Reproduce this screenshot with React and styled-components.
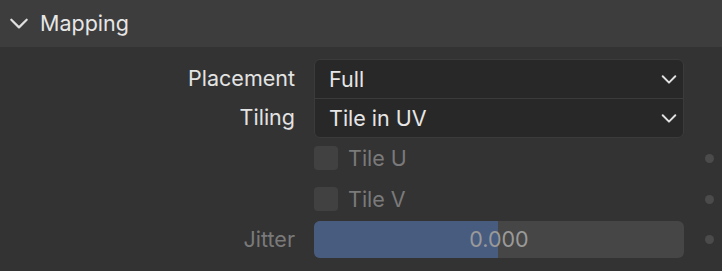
import * as React from "react"
import styled, { createGlobalStyle } from "styled-components"

const GlobalStyle = createGlobalStyle`
  html, body {
    margin: 0;
    padding: 0;
    background: #333333;
    overflow: hidden;
  }
  body {
    font-family: Inter, "Noto Sans", sans-serif;
    -webkit-font-smoothing: antialiased;
  }
`

const Panel = styled.div`
  width: 722px;
  height: 271px;
  background: #333333;
  overflow: hidden;
`

const Header = styled.div`
  height: 47px;
  background: #3d3d3d;
  display: flex;
  align-items: center;
  padding-left: 8px;
  gap: 10px;
  color: #e6e6e6;
  font-size: 21.5px;
  box-sizing: border-box;
  padding-bottom: 2px;
`

const Body = styled.div`
  display: flex;
  flex-direction: column;
  padding-top: 12px;
`

const Row = styled.div`
  display: grid;
  grid-template-columns: 295px 370px 1fr;
  column-gap: 19px;
  align-items: center;
  height: ${ p => p.$h || 40 }px;
`

const Labels = styled.div`
  display: flex;
  flex-direction: column;
`

const Label = styled.div`
  text-align: right;
  font-size: 21.5px;
  color: ${ p => p.$dim ? "#7a7a7a" : "#e3e3e3" };
  height: ${ p => p.$h ? `${ p.$h }px` : "auto" };
  line-height: ${ p => p.$h ? `${ p.$h }px` : "normal" };
`

const DropGroup = styled.div`
  border: 1px solid #3b3b3b;
  border-radius: 6px;
  background: #282828;
  overflow: hidden;
`

const Drop = styled.div`
  height: 38px;
  display: flex;
  align-items: center;
  justify-content: space-between;
  padding: 0 5px 0 14px;
  font-size: 21.5px;
  color: #e6e6e6;
  & + & {
    border-top: 1px solid #3b3b3b;
  }
`

const Check = styled.div`
  display: flex;
  align-items: center;
  gap: 10px;
  font-size: 21.5px;
  color: #7a7a7a;
`

const Box = styled.div`
  width: 24px;
  height: 24px;
  border-radius: 4px;
  background: #414141;
`

const Dot = styled.div`
  width: 9px;
  height: 9px;
  border-radius: 50%;
  background: #4b4b4b;
  margin-left: 2px;
`

const Slider = styled.div`
  position: relative;
  height: 37px;
  border-radius: 6px;
  background: #464646;
  overflow: hidden;
  display: flex;
  align-items: center;
  justify-content: center;
  font-size: 21.5px;
  color: #9a9a9a;
`

const Fill = styled.div`
  position: absolute;
  left: 0;
  top: 0;
  bottom: 0;
  background: #485c80;
`

const SliderText = styled.span`
  position: relative;
`

const SubHeader = styled.div`
  display: flex;
  align-items: center;
  gap: 14px;
  padding-left: 60px;
  margin-top: 7px;
  font-size: 21.5px;
  color: #e0e0e0;
`

const Turned = styled.span`
  display: inline-flex;
  transform: rotate(-90deg);
`

const Chevron = ({ size = 20, color = "#e0e0e0", width = 2 }) => (
  <svg width={ size } height={ size } viewBox="0 0 20 20" fill="none">
    <path d="M3 7 L10 14 L17 7" stroke={ color } strokeWidth={ width } strokeLinecap="round" strokeLinejoin="round" />
  </svg>
)

const App = () => {
  return (
    <Panel>
      <GlobalStyle />
      <Header>
        <Chevron size={ 22 } />
        <span>Mapping</span>
      </Header>
      <Body>
        <Row $h={ 78 }>
          <Labels>
            <Label $h={ 39 }>Placement</Label>
            <Label $h={ 39 }>Tiling</Label>
          </Labels>
          <DropGroup>
            <Drop>
              Full
              <Chevron size={ 18 } width={ 2.2 } />
            </Drop>
            <Drop>
              Tile in UV
              <Chevron size={ 18 } width={ 2.2 } />
            </Drop>
          </DropGroup>
        </Row>
        <Row $h={ 42 }>
          <Label />
          <Check><Box />Tile U</Check>
          <Dot />
        </Row>
        <Row $h={ 40 }>
          <Label />
          <Check><Box />Tile V</Check>
          <Dot />
        </Row>
        <Row $h={ 40 }>
          <Label $dim>Jitter</Label>
          <Slider>
            <Fill style={ { width: "49.6%" } } />
            <SliderText>0.000</SliderText>
          </Slider>
          <Dot />
        </Row>
        <SubHeader>
          <Turned>
            <Chevron size={ 18 } />
          </Turned>
          <span>UV Warp</span>
        </SubHeader>
      </Body>
    </Panel>
  )
}

export default App
